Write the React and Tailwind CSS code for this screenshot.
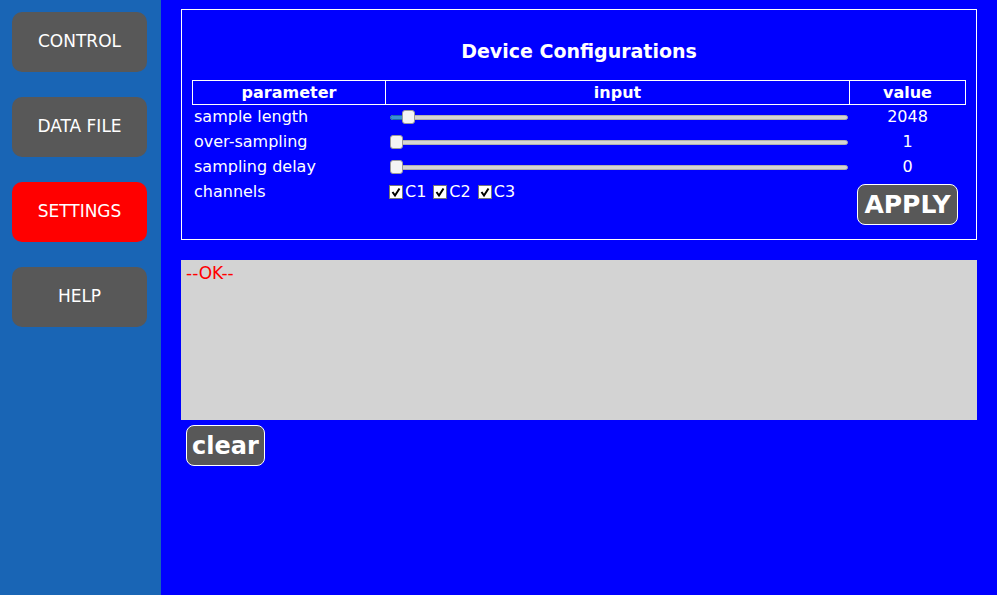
import React from 'react';

const navItems = ['CONTROL', 'DATA FILE', 'SETTINGS', 'HELP'];

function Slider({ pos }) {
  return (
    <div className="relative h-[14px] w-[458px]">
      <div className="absolute left-0 right-0 top-[5px] h-[5px] rounded-full border border-[#b0b0b0] bg-[#d4d4d4]" />
      {pos > 0 && (
        <div className="absolute left-0 top-[5px] h-[5px] rounded-l-full border border-[#1d6aa8] bg-[#3b8fd6]" style={{ width: pos + 2 }} />
      )}
      <div
        className="absolute top-0 h-[14px] w-[13px] rounded-[3px] border border-[#9a9a9a] bg-[#f4f4f4]"
        style={{ left: pos }}
      />
    </div>
  );
}

function Check({ label }) {
  return (
    <span className="flex h-[23px] items-center">
      <span className="flex h-[14px] w-[14px] items-center justify-center border border-[#777] bg-white">
        <svg width="12" height="12" viewBox="0 0 12 12">
          <path d="M2.5 6 L5 9.5 L9.5 2.5" fill="none" stroke="black" strokeWidth="2" />
        </svg>
      </span>
      <span className="ml-[2px]">{label}</span>
    </span>
  );
}

const rows = [
  { name: 'sample length', pos: 12, value: '2048' },
  { name: 'over-sampling', pos: 0, value: '1' },
  { name: 'sampling delay', pos: 0, value: '0' },
];

export default function App() {
  return (
    <div className="flex h-[595px] w-[997px] font-[family-name:DejaVu_Sans,sans-serif] text-white">
      <aside className="flex w-[161px] shrink-0 flex-col gap-[25px] bg-[#1965b5] px-[12px] pt-[12px]">
        {navItems.map((item) => (
          <div
            key={item}
            className={`flex h-[60px] w-[135px] items-center justify-center rounded-[10px] text-[17px] ${
              item === 'SETTINGS' ? 'bg-[#ff0000]' : 'bg-[#585858]'
            }`}
          >
            {item}
          </div>
        ))}
      </aside>

      <main className="flex-1 bg-[#0000ff] pl-[20px] pr-[20px] pt-[9px]">
        <section className="h-[231px] border border-white px-[10px]">
          <h1 className="pt-[27px] text-center text-[19px] font-bold leading-[28px]">Device Configurations</h1>
          <div className="mt-[15px] w-[774px] text-[16px]">
            <div className="flex h-[25px] border border-white font-bold leading-[23px]">
              <div className="w-[193px] border-r border-white text-center">parameter</div>
              <div className="w-[464px] border-r border-white text-center">input</div>
              <div className="flex-1 text-center">value</div>
            </div>
            {rows.map((r) => (
              <div key={r.name} className="flex h-[25px] items-center pb-[2px]">
                <div className="w-[193px] pl-[2px]">{r.name}</div>
                <div className="w-[464px] pl-[5px]">
                  <Slider pos={r.pos} />
                </div>
                <div className="flex-1 text-center">{r.value}</div>
              </div>
            ))}
            <div className="flex items-start">
              <div className="w-[193px] pl-[2px] leading-[23px]">channels</div>
              <div className="flex w-[464px] items-start gap-[7px] pl-[4px] leading-[23px]">
                <Check label="C1" />
                <Check label="C2" />
                <Check label="C3" />
              </div>
              <div className="flex flex-1 justify-center pt-[4px]">
                <button className="h-[41px] w-[101px] rounded-[8px] border border-white bg-[#585858] text-[25px] font-bold text-white">
                  APPLY
                </button>
              </div>
            </div>
          </div>
        </section>

        <div className="mt-[20px] h-[160px] bg-[#d3d3d3] px-[5px] pt-[2px] text-[17px] leading-[22px] text-[#ff0000]">
          --OK--
        </div>
        <button className="ml-[5px] mt-[5px] h-[41px] w-[79px] rounded-[8px] border border-white bg-[#585858] text-[24px] font-bold text-white">
          clear
        </button>
      </main>
    </div>
  );
}
